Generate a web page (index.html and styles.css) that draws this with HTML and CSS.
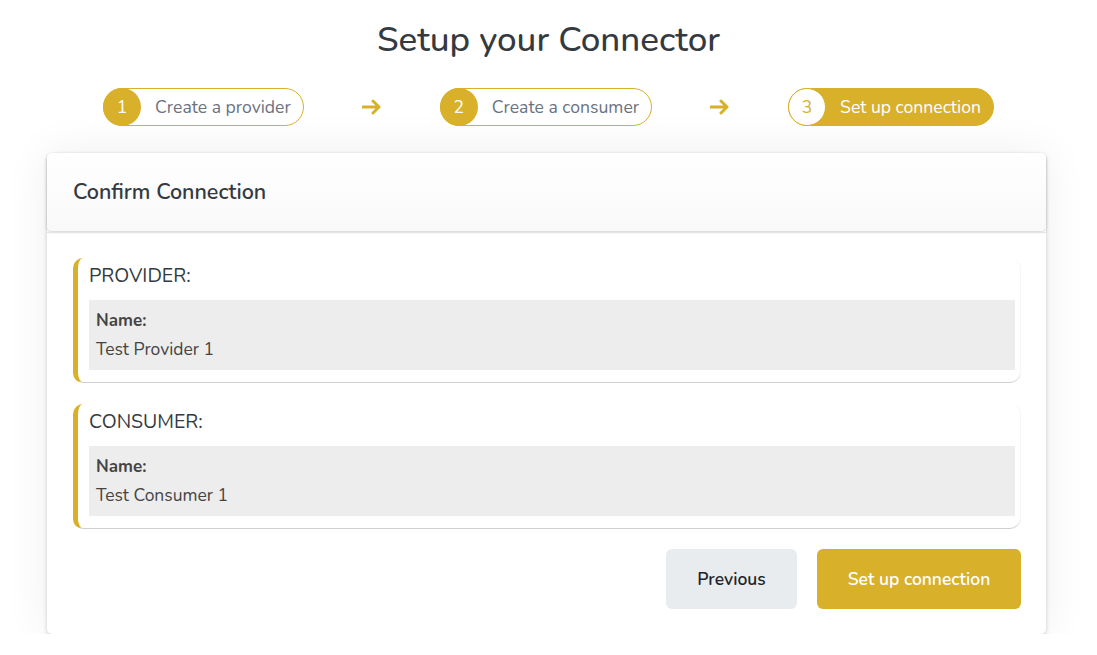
FILE: index.html
```html
<!DOCTYPE html>
<html lang="en">
<head>
<meta charset="utf-8">
<title>Setup your Connector</title>
<link rel="stylesheet" href="styles.css">
</head>
<body>
<h1 class="title">Setup your Connector</h1>
<div class="stepper">
  <div class="step"><span class="num">1</span><span class="label">Create a provider</span></div>
  <svg class="arrow" width="20" height="16" viewBox="0 0 20 16"><path d="M1 8 H17 M11 2 L17 8 L11 14" fill="none" stroke="#d8b02a" stroke-width="3" stroke-linecap="round" stroke-linejoin="round"/></svg>
  <div class="step"><span class="num">2</span><span class="label">Create a consumer</span></div>
  <svg class="arrow" width="20" height="16" viewBox="0 0 20 16"><path d="M1 8 H17 M11 2 L17 8 L11 14" fill="none" stroke="#d8b02a" stroke-width="3" stroke-linecap="round" stroke-linejoin="round"/></svg>
  <div class="step active"><span class="num">3</span><span class="label">Set up connection</span></div>
</div>
<div class="card">
  <div class="card-header">Confirm Connection</div>
  <div class="card-body">
    <div class="section">
      <div class="section-title">PROVIDER:</div>
      <div class="info">
        <div class="info-key">Name:</div>
        <div class="info-val">Test Provider 1</div>
      </div>
    </div>
    <div class="section">
      <div class="section-title">CONSUMER:</div>
      <div class="info">
        <div class="info-key">Name:</div>
        <div class="info-val">Test Consumer 1</div>
      </div>
    </div>
    <div class="actions">
      <button class="btn btn-secondary">Previous</button>
      <button class="btn btn-primary">Set up connection</button>
    </div>
  </div>
</div>
</body>
</html>
```

FILE: styles.css
```css
* { box-sizing: border-box; }
body {
  margin: 0;
  background: #ffffff;
  font-family: "Nunito", "Lato", "Noto Sans", sans-serif;
  color: #343a40;
}
.title {
  margin: 0;
  padding-top: 19px;
  height: 88px;
  text-align: center;
  font-size: 35px;
  font-weight: 500;
  line-height: 42px;
  color: #343a40;
}
.stepper {
  display: flex;
  justify-content: center;
  align-items: center;
  gap: 58px;
  height: 38px;
}
.step {
  display: flex;
  align-items: center;
  height: 38px;
  border: 1px solid #d8b02a;
  border-radius: 19px;
  padding-right: 12px;
  background: #fff;
}
.num {
  width: 38px;
  height: 38px;
  margin: -1px 0 -1px -1px;
  border-radius: 50%;
  background: #d8b02a;
  color: #fff;
  display: flex;
  align-items: center;
  justify-content: center;
  font-size: 17.5px;
}
.label {
  margin-left: 14px;
  font-size: 17.6px;
  color: #6b7280;
}
.step.active { background: #d8b02a; }
.step.active .num {
  background: #fff;
  color: #d8b02a;
  border: 1px solid #d8b02a;
}
.step.active .label { color: #fff; }
.arrow { display: block; }

.card {
  margin: 27px 51px 0 47px;
  border-radius: 5px;
  box-shadow: 0 2px 4px rgba(0,0,0,0.18), 0 0 45px rgba(0,0,0,0.07);
  background: #fff;
}
.card-header {
  height: 78px;
  display: flex;
  align-items: center;
  padding: 0 26px;
  font-size: 21.5px;
  font-weight: 600;
  color: #343a40;
  border-radius: 5px;
  background: linear-gradient(#ffffff, #f9f9f9);
  box-shadow: 0 1px 3px rgba(0,0,0,0.2);
}
.card-body {
  margin-top: 1px;
  padding: 25px 26px 25px 26px;
  border-top: 1px solid #e4e4e4;
  display: flex;
  flex-direction: column;
  gap: 21px;
}
.section {
  border-left: 5px solid #d8b02a;
  border-bottom: 1px solid #cfcfcf;
  border-radius: 10px;
  padding: 6px 5px 12px 11px;
  box-shadow: 1px 0 0 rgba(0,0,0,0.04);
}
.section-title {
  font-size: 19.5px;
  line-height: 24px;
  margin-bottom: 12px;
  color: #343a40;
}
.info {
  background: #ededed;
  padding: 9px 7px;
}
.info-key {
  font-size: 17px;
  line-height: 24px;
  font-weight: 700;
  color: #444;
}
.info-val {
  margin-top: 4px;
  font-size: 17.5px;
  line-height: 24px;
  color: #444;
}
.actions {
  display: flex;
  justify-content: flex-end;
  gap: 20px;
  margin-top: -1px;
  margin-right: -1px;
}
.btn {
  height: 60px;
  border: none;
  border-radius: 6px;
  font-family: inherit;
  font-size: 17.5px;
  font-weight: 600;
  padding: 0;
}
.btn-secondary {
  width: 131px;
  background: #e9ecef;
  color: #212529;
}
.btn-primary {
  width: 204px;
  background: #d8b02a;
  color: #fff;
}
```
